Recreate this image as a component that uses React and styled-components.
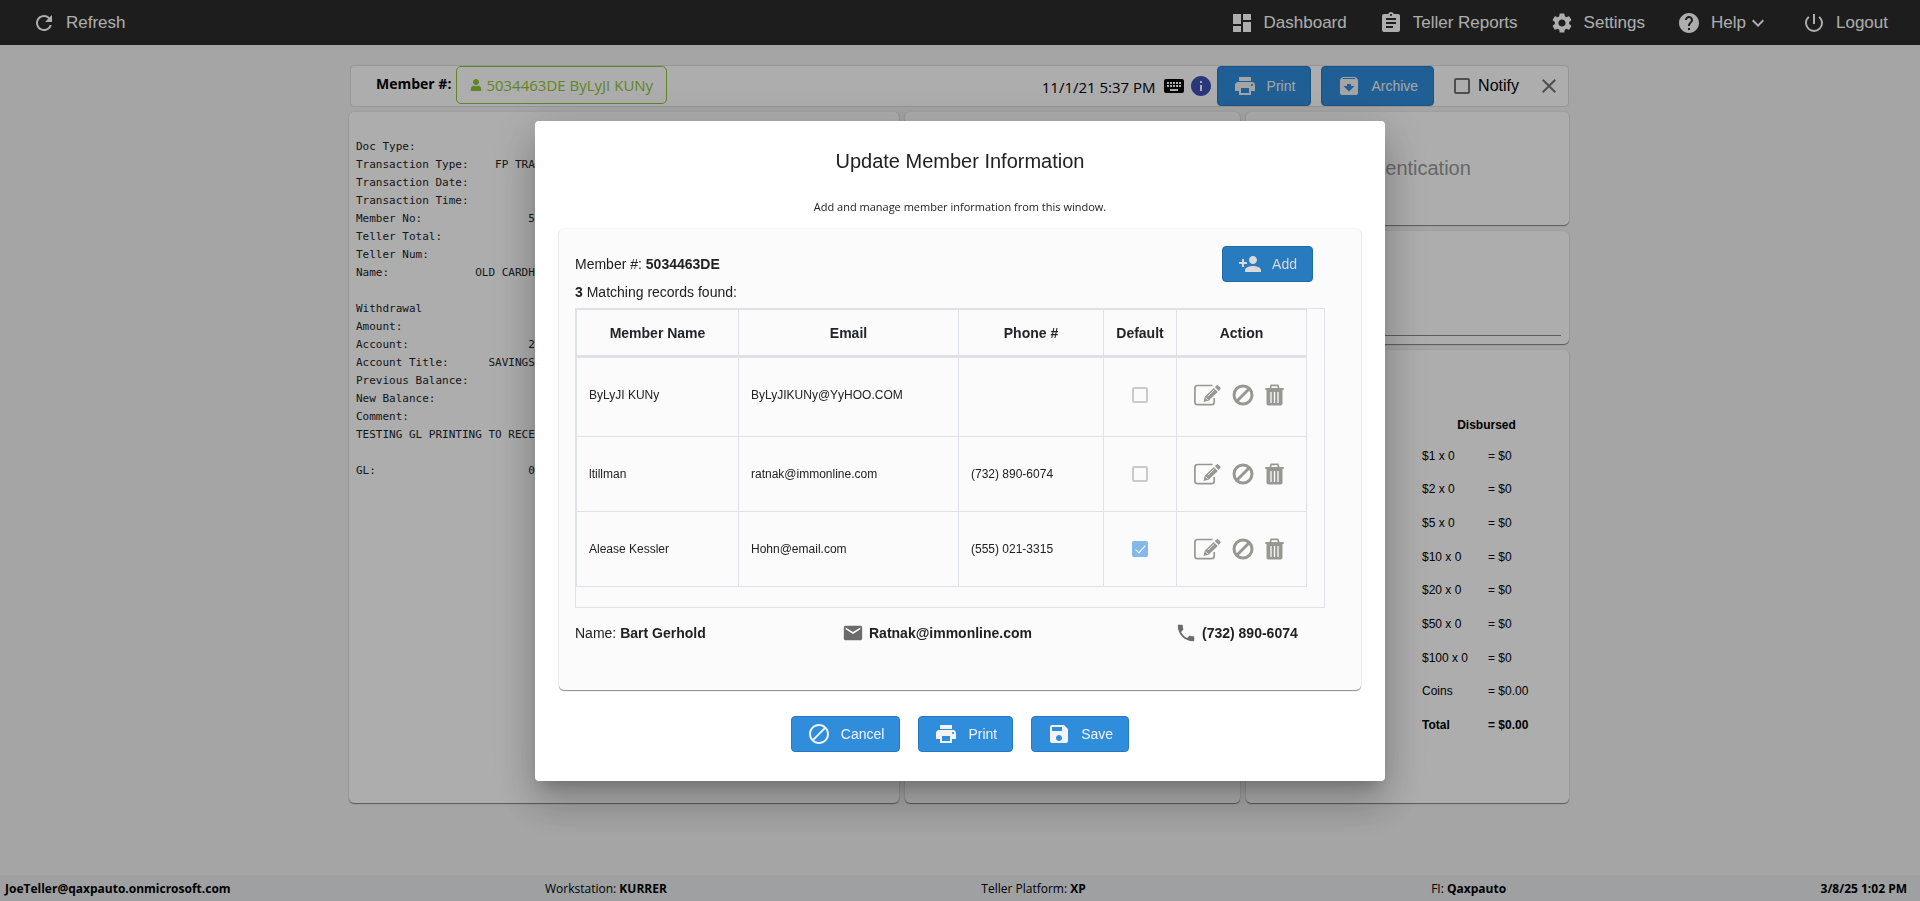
import styled, { createGlobalStyle, css } from "styled-components"
import {
  MdArchive,
  MdAssignment,
  MdBlock,
  MdClose,
  MdDashboard,
  MdEmail,
  MdExpandMore,
  MdHelp,
  MdInfo,
  MdKeyboard,
  MdPersonAdd,
  MdPhone,
  MdPowerSettingsNew,
  MdPrint,
  MdRefresh,
  MdSave,
  MdSettings,
} from "react-icons/md"
import { FaUser } from "react-icons/fa"

const arial = `"Liberation Sans", Arial, sans-serif`
const openSans = `"Open Sans", "Noto Sans", sans-serif`

const GlobalStyle = createGlobalStyle`
  *, *::before, *::after {
    box-sizing: border-box;
  }

  body {
    margin: 0;
    background: #f3f3f3;
    color: #000;
    font-family: ${arial};
    font-size: 14px;
  }

  button, input {
    font: inherit;
    margin: 0;
  }

  svg {
    display: block;
    flex-shrink: 0;
  }
`

const raised = css`
  border-radius: 5px;
  box-shadow: 0 1px 1px rgba(0, 0, 0, 0.45), 0 0 2px rgba(0, 0, 0, 0.12);
`

const Page = styled.div`
  display: flex;
  flex-direction: column;
  min-height: 100vh;
`

const TopBar = styled.nav`
  display: flex;
  align-items: center;
  justify-content: space-between;
  height: 45px;
  padding: 0 32px;
  background: #2b2b2b;
`

const NavGroup = styled.div`
  display: flex;
  gap: 32px;
`

const NavLink = styled.a`
  display: flex;
  align-items: center;
  gap: 10px;
  color: #fff;
  font-size: 17px;
  line-height: 20px;
  text-decoration: none;
`

const WithArrow = styled.span`
  display: flex;
  align-items: center;
`

const Content = styled.main`
  flex: 1;
  width: 100%;
  max-width: 1222px;
  margin: 0 auto;
  padding: 20px 2px 0 0;
`

const MemberBar = styled.header`
  display: flex;
  align-items: center;
  height: 42px;
  margin: 0 0 5px 1px;
  padding: 0 7px 0 25px;
  background: #fff;
  border: 1px solid #ddd;
  border-radius: 4px;
`

const MemberLabel = styled.span`
  margin-right: 5px;
  padding-bottom: 6px;
  font-family: ${openSans};
  font-size: 14px;
  font-weight: 700;
`

const MemberChip = styled.button`
  display: flex;
  align-items: center;
  align-self: flex-start;
  gap: 4px;
  height: 38px;
  padding: 0 13px;
  background: transparent;
  border: 1px solid #8fc536;
  border-radius: 5px;
  color: #8fc536;
  font-family: ${openSans};
  font-size: 15px;
`

const BarActions = styled.div`
  display: flex;
  align-items: center;
  margin-left: auto;
`

const Stamp = styled.time`
  margin-right: 6px;
  padding-top: 2px;
  font-family: ${openSans};
  font-size: 15px;
`

const BarIcons = styled.div`
  display: flex;
  gap: 3px;
`

const Button = styled.button`
  display: flex;
  align-items: center;
  gap: 10px;
  height: ${({ $tall }) => ($tall ? "40px" : "36px")};
  padding: 0 15px;
  background: ${({ $active }) => ($active ? "#297bc0" : "#308ddc")};
  border: 1px solid ${({ $active }) => ($active ? "#226ba8" : "#2679c1")};
  border-radius: 4px;
  color: ${({ $active }) => ($active ? "#d9d9d9" : "#f3f3f3")};
  font-size: 14px;
`

const BarButtons = styled.div`
  display: flex;
  gap: 10px;
  margin: 0 20px 0 4px;
`

const NotifyLabel = styled.label`
  display: flex;
  align-items: center;
  gap: 8px;
  margin-right: 18px;
  font-size: 16px;
`

const Tick = styled.input.attrs({ type: "checkbox" })`
  appearance: none;
  display: inline-grid;
  place-items: center;
  width: 16px;
  height: 16px;
  border: 2px solid ${({ $dark }) => ($dark ? "#757575" : "#cacaca")};
  border-radius: 2px;
  vertical-align: middle;

  &:checked {
    background: #82b8ea;
    border-color: #82b8ea;
  }

  &:checked::after {
    content: "";
    width: 5px;
    height: 10px;
    margin-bottom: 3px;
    border: solid #fff;
    border-width: 0 1px 1px 0;
    transform: rotate(42deg);
  }
`

const IconButton = styled.button`
  display: flex;
  padding: 0;
  background: none;
  border: 0;
  color: ${({ $color }) => $color};
`

const Panels = styled.div`
  display: grid;
  grid-template-columns: 550fr 335fr 323fr;
  gap: 6px;
`

const Panel = styled.section`
  ${raised}
  background: #fff;
`

const Receipt = styled.pre`
  margin: 0;
  padding: 26px 7px;
  overflow: hidden;
  color: #212529;
  font-family: "DejaVu Sans Mono", monospace;
  font-size: 11px;
  line-height: 18px;
`

const SideColumn = styled.div`
  display: grid;
  grid-template-rows: 113px 113px 453px;
  gap: 6px;
`

const AuthPanel = styled(Panel)`
  display: grid;
  place-items: center;
  color: #999;
  font-size: 20px;
`

const SignPanel = styled(Panel)`
  padding: 0 8px 8px;

  &::after {
    content: "";
    display: block;
    height: 105px;
    border-bottom: 1px solid #888;
  }
`

const CashPanel = styled(Panel)`
  display: flex;
  justify-content: flex-end;
  align-items: flex-start;
  padding: 60px 32px 0 0;
`

const CashTable = styled.table`
  width: 115px;
  height: 332px;
  border-collapse: collapse;
  font-size: 12px;
  white-space: nowrap;

  td, th {
    padding: 0;
    text-align: left;
  }

  thead th {
    height: 29px;
    padding-left: 14px;
    text-align: center;
  }

  tr > :first-child:not([colspan]) {
    width: 66px;
  }
`

const CashRow = styled.tr`
  font-weight: ${({ $total }) => ($total ? 700 : 400)};
`

const StatusBar = styled.footer`
  display: flex;
  align-items: center;
  justify-content: space-between;
  height: 26px;
  padding: 0 13px 0 5px;
  background: #e9ecef;
  font-family: ${openSans};
  font-size: 12px;
  white-space: nowrap;
`

const Platform = styled.span`
  padding-right: 31px;
`

const Overlay = styled.div`
  position: fixed;
  inset: 0;
  display: flex;
  align-items: center;
  justify-content: center;
  padding-top: 1px;
  background: rgba(0, 0, 0, 0.32);
`

const Dialog = styled.section`
  width: 100%;
  max-width: 850px;
  padding: 24px 24px 29px;
  background: #fff;
  border-radius: 4px;
  box-shadow: 0 11px 15px -7px rgba(0, 0, 0, 0.2),
    0 24px 38px 3px rgba(0, 0, 0, 0.14), 0 9px 46px 8px rgba(0, 0, 0, 0.12);
  color: #212121;
`

const Title = styled.h2`
  margin: 0;
  font-size: 20px;
  font-weight: 400;
  line-height: 32px;
  text-align: center;
`

const Subtitle = styled.p`
  margin: 20px 0 12px;
  font-family: ${openSans};
  font-size: 11px;
  line-height: 20px;
  text-align: center;
`

const Card = styled.div`
  ${raised}
  padding: 17px 16px 46px;
  background: #fbfbfb;
`

const CardHead = styled.div`
  display: flex;
  align-items: center;
  justify-content: space-between;
  max-width: 738px;
`

const Found = styled.p`
  margin: 0;
  line-height: 20px;
  padding-bottom: 6px;
`

const TableBox = styled.div`
  max-width: 750px;
  padding: 0 17px 20px 0;
  border: 1px solid #dee2e6;
`

const MemberTable = styled.table`
  width: 100%;
  table-layout: fixed;
  border-collapse: collapse;
  font-size: 12px;

  th, td {
    padding: 0 12px;
    border: 1px solid #dee2e6;
    text-align: left;
  }

  th {
    height: 47px;
    padding: 0;
    border-bottom-width: 3px;
    color: #212529;
    font-size: 14px;
    text-align: center;
  }

  td {
    height: 75px;
  }

  tbody tr:first-child td {
    height: 80px;
    padding-bottom: 4px;
  }
`

const Col = styled.col`
  width: ${({ $width }) => $width};
`

const CenterCell = styled.td`
  &&& {
    padding-left: 0;
    padding-right: 0;
    text-align: center;
  }
`

const RowActions = styled.div`
  display: flex;
  align-items: center;
  justify-content: center;
  gap: 11px;
  padding-right: 6px;
`

const Contact = styled.div`
  display: grid;
  grid-template-columns: 267px 333px auto;
  margin-top: 14px;
  line-height: 22px;
`

const ContactItem = styled.span`
  display: flex;
  align-items: center;
  gap: 5px;

  svg {
    color: #6b6b6b;
  }
`

const DialogActions = styled.div`
  display: flex;
  justify-content: center;
  gap: 18px;
  margin-top: 26px;
`

const EditIcon = () => (
  <svg width="27" height="22" viewBox="0 0 27 22" fill="none">
    <path
      d="M18.500 1.500H3.500A2.700 2.700 0 0 0 0.900 4.200V18a2.700 2.700 0 0 0 2.700 2.700H17.500A2.700 2.700 0 0 0 20.200 18v-4"
      stroke="currentColor"
      strokeWidth="1.700"
    />
    <path
      d="M9.500 18l1.200-5.200L19.800 4l4 4-9.300 8.800zM20.800 3l1.800-1.600a1.200 1.200 0 0 1 1.700 0l2 2a1.200 1.200 0 0 1 0 1.700L24.700 7z"
      fill="currentColor"
    />
    <path d="M11.500 13.600l2.500 2.500M13.800 12.200l6.600-6.400" stroke="#fbfbfb" strokeWidth="0.800" />
  </svg>
)

const BanIcon = () => (
  <svg width="22" height="22" viewBox="0 0 22 22" fill="none">
    <circle cx="11" cy="11" r="9" stroke="currentColor" strokeWidth="3" />
    <path d="M4.800 17.200L17.200 4.800" stroke="currentColor" strokeWidth="3" />
  </svg>
)

const TrashIcon = () => (
  <svg width="19" height="22" viewBox="0 0 19 22" fill="none">
    <path d="M5.200 4.500l1-3.200h6.600l1 3.200" stroke="currentColor" strokeWidth="1.700" />
    <path d="M0.300 4h18.400v2H0.300z" fill="currentColor" />
    <path d="M1.500 6h16v13.500a2 2 0 0 1-2 2h-12a2 2 0 0 1-2-2z" fill="currentColor" />
    <path d="M6 8v11M9.500 8v11M13 8v11" stroke="#fbfbfb" strokeWidth="1.300" />
  </svg>
)

const receipt = `Doc Type:
Transaction Type:    FP TRANSFER
Transaction Date:
Transaction Time:
Member No:                503446
Teller Total:
Teller Num:
Name:             OLD CARDHOLDER

Withdrawal
Amount:
Account:                  2
Account Title:      SAVINGS
Previous Balance:
New Balance:
Comment:
TESTING GL PRINTING TO RECEIPT

GL:                       0`

const cash = [
  ["$1 x 0", "= $0"],
  ["$2 x 0", "= $0"],
  ["$5 x 0", "= $0"],
  ["$10 x 0", "= $0"],
  ["$20 x 0", "= $0"],
  ["$50 x 0", "= $0"],
  ["$100 x 0", "= $0"],
  ["Coins", "= $0.00"],
  ["Total", "= $0.00"],
]

const members = [
  { name: "ByLyJI KUNy", email: "ByLyJIKUNy@YyHOO.COM", phone: "" },
  { name: "ltillman", email: "ratnak@immonline.com", phone: "(732) 890-6074" },
  { name: "Alease Kessler", email: "Hohn@email.com", phone: "(555) 021-3315", isDefault: true },
]

const NavItem = ({ icon: Icon, children }) => (
  <NavLink href="#">
    <Icon size={24} />
    {children}
  </NavLink>
)

const Nav = () => (
  <TopBar>
    <NavItem icon={MdRefresh}>Refresh</NavItem>
    <NavGroup>
      <NavItem icon={MdDashboard}>Dashboard</NavItem>
      <NavItem icon={MdAssignment}>Teller Reports</NavItem>
      <NavItem icon={MdSettings}>Settings</NavItem>
      <NavItem icon={MdHelp}>
        <WithArrow>
          Help
          <MdExpandMore size={24} />
        </WithArrow>
      </NavItem>
      <NavItem icon={MdPowerSettingsNew}>Logout</NavItem>
    </NavGroup>
  </TopBar>
)

const MemberHeader = () => (
  <MemberBar>
    <MemberLabel>Member #:</MemberLabel>
    <MemberChip>
      <FaUser size={12} />
      5034463DE ByLyJI KUNy
    </MemberChip>
    <BarActions>
      <Stamp>11/1/21 5:37 PM</Stamp>
      <BarIcons>
        <MdKeyboard size={24} />
        <IconButton $color="#3f51b5" aria-label="Info">
          <MdInfo size={24} />
        </IconButton>
      </BarIcons>
      <BarButtons>
        <Button $tall>
          <MdPrint size={24} />
          Print
        </Button>
        <Button $tall>
          <MdArchive size={24} />
          Archive
        </Button>
      </BarButtons>
      <NotifyLabel>
        <Tick $dark />
        Notify
      </NotifyLabel>
      <IconButton $color="#757575" aria-label="Close">
        <MdClose size={24} />
      </IconButton>
    </BarActions>
  </MemberBar>
)

const Disbursed = () => (
  <CashTable>
    <thead>
      <tr>
        <th colSpan={2}>Disbursed</th>
      </tr>
    </thead>
    <tbody>
      {cash.map(([label, amount]) => (
        <CashRow key={label} $total={label === "Total"}>
          <td>{label}</td>
          <td>{amount}</td>
        </CashRow>
      ))}
    </tbody>
  </CashTable>
)

const Members = () => (
  <TableBox>
    <MemberTable>
      <colgroup>
        <Col $width="162px" />
        <Col $width="220px" />
        <Col $width="145px" />
        <Col $width="73px" />
        <Col $width="auto" />
      </colgroup>
      <thead>
        <tr>
          <th>Member Name</th>
          <th>Email</th>
          <th>Phone #</th>
          <th>Default</th>
          <th>Action</th>
        </tr>
      </thead>
      <tbody>
        {members.map(({ name, email, phone, isDefault }) => (
          <tr key={name}>
            <td>{name}</td>
            <td>{email}</td>
            <td>{phone}</td>
            <CenterCell>
              <Tick defaultChecked={isDefault} aria-label={`Default ${name}`} />
            </CenterCell>
            <CenterCell>
              <RowActions>
                <IconButton $color="#989892" aria-label="Edit">
                  <EditIcon />
                </IconButton>
                <IconButton $color="#989892" aria-label="Disable">
                  <BanIcon />
                </IconButton>
                <IconButton $color="#989892" aria-label="Delete">
                  <TrashIcon />
                </IconButton>
              </RowActions>
            </CenterCell>
          </tr>
        ))}
      </tbody>
    </MemberTable>
  </TableBox>
)

const UpdateDialog = () => (
  <Overlay>
    <Dialog role="dialog" aria-labelledby="dialog-title">
      <Title id="dialog-title">Update Member Information</Title>
      <Subtitle>Add and manage member information from this window.</Subtitle>
      <Card>
        <CardHead>
          <span>
            Member #: <b>5034463DE</b>
          </span>
          <Button $active>
            <MdPersonAdd size={24} />
            Add
          </Button>
        </CardHead>
        <Found>
          <b>3</b> Matching records found:
        </Found>
        <Members />
        <Contact>
          <span>
            Name: <b>Bart Gerhold</b>
          </span>
          <ContactItem>
            <MdEmail size={22} />
            <b>Ratnak@immonline.com</b>
          </ContactItem>
          <ContactItem>
            <MdPhone size={22} />
            <b>(732) 890-6074</b>
          </ContactItem>
        </Contact>
      </Card>
      <DialogActions>
        <Button>
          <MdBlock size={24} />
          Cancel
        </Button>
        <Button>
          <MdPrint size={24} />
          Print
        </Button>
        <Button>
          <MdSave size={24} />
          Save
        </Button>
      </DialogActions>
    </Dialog>
  </Overlay>
)

const App = () => (
  <>
    <GlobalStyle />
    <Page>
      <Nav />
      <Content>
        <MemberHeader />
        <Panels>
          <Panel>
            <Receipt>{receipt}</Receipt>
          </Panel>
          <Panel />
          <SideColumn>
            <AuthPanel>Authentication</AuthPanel>
            <SignPanel />
            <CashPanel>
              <Disbursed />
            </CashPanel>
          </SideColumn>
        </Panels>
      </Content>
      <StatusBar>
        <b>JoeTeller@qaxpauto.onmicrosoft.com</b>
        <span>
          Workstation: <b>KURRER</b>
        </span>
        <Platform>
          Teller Platform: <b>XP</b>
        </Platform>
        <span>
          FI: <b>Qaxpauto</b>
        </span>
        <b>3/8/25 1:02 PM</b>
      </StatusBar>
    </Page>
    <UpdateDialog />
  </>
)

export default App
